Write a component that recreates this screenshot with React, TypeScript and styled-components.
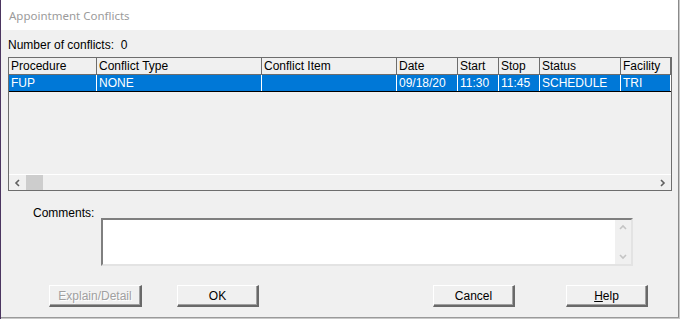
import React from 'react';
import styled, { createGlobalStyle } from 'styled-components';

const GlobalStyle = createGlobalStyle`
  html, body {
    margin: 0;
    padding: 0;
    background: #b4b4b4;
  }
  body {
    font-family: 'Liberation Sans', Arial, sans-serif;
    font-size: 12px;
    color: #000;
  }
`;

const Page = styled.div`
  width: 680px;
  height: 319px;
  overflow: hidden;
  display: flex;
  background: linear-gradient(90deg, #4b3560 0, #4b3560 1px, #c9c9c9 1px);
`;

const Window = styled.div`
  margin-left: 1px;
  width: 677px;
  height: 317px;
  display: flex;
  flex-direction: column;
  background: #f0f0f0;
  border-right: 1px solid #8a8a8a;
  border-bottom: 1px solid #9a9a9a;
`;

const TitleBar = styled.div`
  height: 30px;
  flex: none;
  display: flex;
  align-items: center;
  padding-left: 8px;
  background: #fff;
  color: #9b9b9b;
  font-family: 'Noto Sans', 'Liberation Sans', sans-serif;
  font-size: 11.5px;
`;

const Body = styled.div`
  flex: 1;
  display: flex;
  flex-direction: column;
  padding: 0 0 0 7px;
`;

const CountLabel = styled.div`
  margin-top: 8px;
  line-height: 14px;
  white-space: pre;
`;

const Table = styled.div`
  margin-top: 5px;
  width: 662px;
  height: 132px;
  border: 1px solid #6d6d6d;
  display: flex;
  flex-direction: column;
`;

const cols = '88px 165px 135px 61px 41px 41px 81px 50px';

const HeaderRow = styled.div`
  display: grid;
  grid-template-columns: ${cols};
  height: 16px;
  border-bottom: 1px solid #6d6d6d;
`;

const HeaderCell = styled.div`
  line-height: 16px;
  padding-left: 2px;
  border-right: 1px solid #6d6d6d;
  white-space: nowrap;
  overflow: hidden;
`;

const DataRow = styled.div<{ selected?: boolean }>`
  display: grid;
  grid-template-columns: ${cols};
  height: 16px;
  background: ${({ selected }) => (selected ? '#0078d7' : 'transparent')};
  color: ${({ selected }) => (selected ? '#fff' : '#000')};
  border-bottom: 1px solid #000;
`;

const DataCell = styled.div`
  line-height: 16px;
  padding-left: 2px;
  border-right: 1px solid #fff;
  white-space: nowrap;
  overflow: hidden;
`;

const TableFill = styled.div`
  flex: 1;
`;

const HScroll = styled.div`
  height: 15px;
  border-top: 1px solid #fff;
  display: flex;
  align-items: center;
`;

const ArrowBox = styled.div`
  width: 17px;
  height: 15px;
  display: flex;
  align-items: center;
  justify-content: center;
`;

const Thumb = styled.div`
  width: 17px;
  height: 15px;
  background: #cdcdcd;
`;

const ScrollSpacer = styled.div`
  flex: 1;
`;

const CommentsRow = styled.div`
  display: flex;
  align-items: flex-start;
  margin-top: 15px;
  padding-left: 25px;
`;

const CommentsLabel = styled.div`
  width: 68px;
  line-height: 14px;
  color: #000;
`;

const CommentBox = styled.div`
  margin-top: 12px;
  width: 528px;
  height: 44px;
  background: #fff;
  border-top: 2px solid #7f7f7f;
  border-left: 2px solid #7f7f7f;
  border-bottom: 2px solid #e3e3e3;
  border-right: 2px solid #e3e3e3;
  display: flex;
  justify-content: flex-end;
`;

const VScroll = styled.div`
  width: 16px;
  height: 100%;
  background: #f0f0f0;
  display: flex;
  flex-direction: column;
  justify-content: space-between;
  align-items: center;
  padding: 4px 0 3px;
  box-sizing: border-box;
`;

const ButtonRow = styled.div`
  display: flex;
  margin-top: 19px;
`;

const Button = styled.div<{ offset: number; w: number; disabled?: boolean }>`
  margin-left: ${({ offset }) => offset}px;
  width: ${({ w }) => w}px;
  height: 22px;
  box-sizing: border-box;
  display: flex;
  align-items: center;
  justify-content: center;
  background: #f0f0f0;
  border-top: 1px solid #fff;
  border-left: 1px solid #fff;
  border-right: 2px solid #696969;
  border-bottom: 2px solid #696969;
  box-shadow: inset -1px -1px 0 #a0a0a0;
  color: ${({ disabled }) => (disabled ? '#a0a0a0' : '#000')};
  text-shadow: ${({ disabled }) => (disabled ? '1px 1px 0 #fff' : 'none')};
  line-height: 14px;
  padding-top: 1px;
`;

const Mnemonic = styled.span`
  text-decoration: underline;
`;

const Chevron = ({ dir, color }: { dir: 'left' | 'right' | 'up' | 'down'; color: string }) => {
  const pts = {
    left: '5,1 2,4 5,7',
    right: '2,1 5,4 2,7',
    up: '1,5 4,2 7,5',
    down: '1,2 4,5 7,2',
  }[dir];
  return (
    <svg width="8" height="8" viewBox="0 0 8 8">
      <polyline points={pts} fill="none" stroke={color} strokeWidth="1.6" />
    </svg>
  );
};

const headers = ['Procedure', 'Conflict Type', 'Conflict Item', 'Date', 'Start', 'Stop', 'Status', 'Facility'];
const row = ['FUP', 'NONE', '', '09/18/20', '11:30', '11:45', 'SCHEDULE', 'TRI'];

const App = () => {
  return (
    <Page>
      <GlobalStyle />
      <Window>
        <TitleBar>Appointment Conflicts</TitleBar>
        <Body>
          <CountLabel>{'Number of conflicts:  0'}</CountLabel>
          <Table>
            <HeaderRow>
              {headers.map((h) => (
                <HeaderCell key={h}>{h}</HeaderCell>
              ))}
            </HeaderRow>
            <DataRow selected>
              {row.map((c, i) => (
                <DataCell key={i}>{c}</DataCell>
              ))}
            </DataRow>
            <TableFill />
            <HScroll>
              <ArrowBox>
                <Chevron dir="left" color="#606060" />
              </ArrowBox>
              <Thumb />
              <ScrollSpacer />
              <ArrowBox>
                <Chevron dir="right" color="#606060" />
              </ArrowBox>
            </HScroll>
          </Table>
          <CommentsRow>
            <CommentsLabel>Comments:</CommentsLabel>
            <CommentBox>
              <VScroll>
                <Chevron dir="up" color="#c4c4c4" />
                <Chevron dir="down" color="#c4c4c4" />
              </VScroll>
            </CommentBox>
          </CommentsRow>
          <ButtonRow>
            <Button offset={41} w={93} disabled>
              Explain/Detail
            </Button>
            <Button offset={35} w={82}>
              OK
            </Button>
            <Button offset={174} w={82}>
              Cancel
            </Button>
            <Button offset={51} w={82}>
              <Mnemonic>H</Mnemonic>elp
            </Button>
          </ButtonRow>
        </Body>
      </Window>
    </Page>
  );
};

export default App;
